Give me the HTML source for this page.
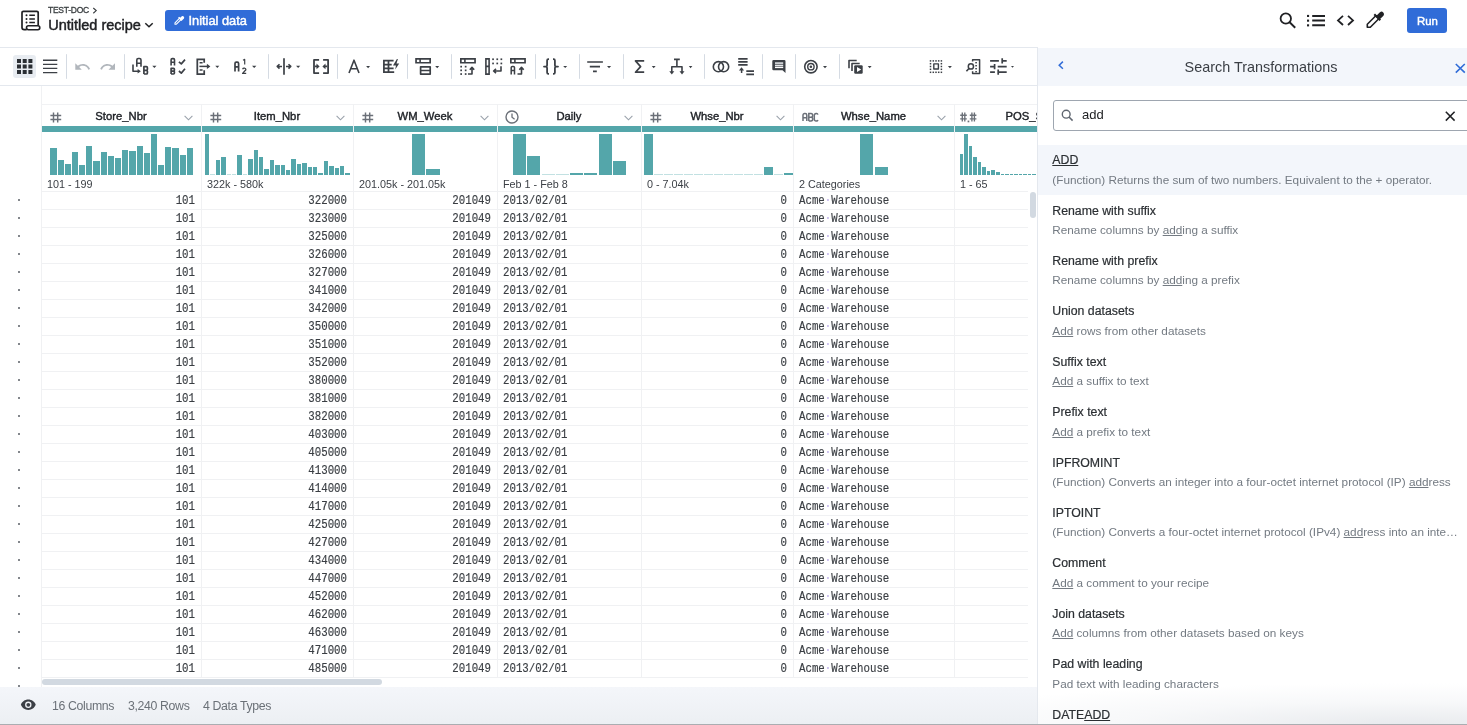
<!DOCTYPE html>
<html><head><meta charset="utf-8">
<style>
*{box-sizing:border-box}
html,body{margin:0;padding:0;width:1467px;height:725px;overflow:hidden;background:#fff;font-family:"Liberation Sans",sans-serif}
body{filter:grayscale(0.01)}
.abs{position:absolute}
#hdrline{position:absolute;left:0;top:47px;width:1467px;height:1px;background:#e4e8ee}
#tbline{position:absolute;left:0;top:85px;width:1037px;height:1px;background:#e4e8ee}
#crumb{position:absolute;left:48px;top:4.8px;font-size:8.5px;color:#3c4043;letter-spacing:-0.25px;-webkit-text-stroke:0.3px #3c4043}
#title{position:absolute;left:48.2px;top:17.3px;font-size:14.5px;color:#202124;white-space:nowrap;-webkit-text-stroke:0.45px #202124}
#initbtn{position:absolute;left:165px;top:10px;width:91px;height:21px;background:#2f6cd9;border-radius:3px}
#initbtn span{position:absolute;left:23.5px;top:3px;font-size:12.8px;color:#fff;white-space:nowrap;-webkit-text-stroke:0.45px #fff}
#runbtn{position:absolute;left:1407px;top:8px;width:40px;height:25px;background:#2f6cd9;border-radius:3px}
#runbtn span{position:absolute;left:10px;top:6.5px;font-size:11.4px;color:#fff;-webkit-text-stroke:0.45px #fff}
/* panel */
#panel{position:absolute;left:1037px;top:47px;width:430px;height:678px;background:#fff;border-left:1px solid #e4e8ee;overflow:hidden}
#phead{position:absolute;left:0;top:1px;width:430px;height:38px;background:#f3f6fb}
#ptitle{position:absolute;left:0;top:11px;width:446px;text-align:center;font-size:14.4px;color:#3a3e44}
#sbox{position:absolute;left:15px;top:53px;width:440px;height:31px;border:1px solid #9ea6b0;border-radius:3px;background:#fff}
#sbox span{position:absolute;left:28px;top:6px;font-size:13px;color:#202124}
.item{position:absolute;left:0;width:430px;height:50.4px}
.item.sel{background:#f3f6fb;height:50px}
.it{position:absolute;left:14.3px;top:8.2px;font-size:12.3px;color:#2b2f33;white-space:nowrap;-webkit-text-stroke:0.2px #2b2f33}
.id{position:absolute;left:14.3px;top:27.5px;font-size:11.75px;color:#737a82;white-space:nowrap}
.it u,.id u{text-decoration:underline;text-underline-offset:1px;text-decoration-thickness:1px}
#pfade{position:absolute;left:0;top:598px;width:430px;height:80px;background:radial-gradient(ellipse 520px 42px at 85% 100%,rgba(226,229,233,0.8),rgba(238,240,243,0.45) 55%,rgba(255,255,255,0) 100%)}
/* table */
#table{position:absolute;left:0;top:86px;width:1037px;height:601px;overflow:hidden}
.vb{position:absolute;top:104px;width:1px;height:573px;background:#f0f1f3}
#lb{position:absolute;left:41px;top:0;width:1px;height:601px;background:#f0f1f3}
#htop{position:absolute;left:41px;top:18px;width:1000px;height:1px;background:#f1f2f4}
.hicon{position:absolute;top:112px;height:12px;line-height:0}
.hlabel{position:absolute;top:109.5px;text-align:center;font-size:11.25px;color:#202328;white-space:nowrap;-webkit-text-stroke:0.4px #202328}
.chev{position:absolute;top:114.5px}
.tbar{position:absolute;top:126px;height:6px;background:#53a6aa}
.hb{position:absolute;background:#53a6aa}
.rng{position:absolute;top:178.3px;font-size:10.8px;color:#3c4046;white-space:nowrap}
.hr{position:absolute;left:42px;width:986px;height:1px;background:#f0f1f3}
.dot{position:absolute;left:18px;width:2px;height:2px;background:#83878c}
.c{position:absolute;height:18px;line-height:18px;font-family:"Liberation Mono",monospace;font-size:10.75px;color:#3a3e43;white-space:nowrap;padding-top:1.2px;transform:scaleY(1.155);transform-origin:0 13.3px;-webkit-text-stroke:0.15px #3a3e43}
.c.r{text-align:right}
.md{color:#b7a6e6;-webkit-text-stroke:0}
#htrack{position:absolute;left:42px;top:592px;width:995px;height:9px;background:#fff}
#vscroll{position:absolute;left:1030px;top:106px;width:6px;height:26px;border-radius:3px;background:#d2d9e1}
#hscroll{position:absolute;left:42px;top:593px;width:340px;height:6px;border-radius:3px;background:#d2d9e1}
#status{position:absolute;left:0;top:687px;width:1037px;height:37px;background:linear-gradient(to bottom,#f4f6fa,#eceff3)}
#status span{position:absolute;top:11.5px;font-size:12.3px;letter-spacing:-0.35px;color:#6b7178;white-space:nowrap}
#bline{position:absolute;left:0;top:724px;width:1467px;height:1px;background:#aaadb1}
</style></head><body>
<!-- header -->
<svg class="abs" style="left:0;top:0" width="60" height="40" viewBox="0 0 60 40">
 <path d="M38.2 25.6V12.7a1.4 1.4 0 0 0-1.4-1.4H23.4a1.4 1.4 0 0 0-1.4 1.4V27.4a2.2 2.2 0 0 0 2.2 2.2h2.5" fill="none" stroke="#202124" stroke-width="1.7"/>
 <rect x="26.5" y="25.8" width="13.3" height="3.9" rx="1.9" fill="none" stroke="#202124" stroke-width="1.6"/>
 <circle cx="26.5" cy="15.3" r="1" fill="#202124"/><circle cx="26.5" cy="18.9" r="1" fill="#202124"/><circle cx="26.5" cy="22.4" r="1" fill="#202124"/>
 <path d="M29.3 15.3H34.9M29.3 18.9H34.9M29.3 22.4H34.9" stroke="#202124" stroke-width="1.5"/>
</svg>
<div id="crumb">TEST-DOC <svg width="6" height="7" viewBox="0 0 6 7" style="vertical-align:-0.8px;margin-left:1.2px"><path d="M1.3 1L4.2 3.6L1.3 6.2" stroke="#3c4043" stroke-width="1.15" fill="none"/></svg></div>
<div id="title">Untitled recipe</div>
<svg class="abs" style="left:144px;top:20.6px" width="10" height="8" viewBox="0 0 10 8"><path d="M1.3 2.2L5 5.8L8.7 2.2" stroke="#202124" stroke-width="1.5" fill="none"/></svg>
<div id="initbtn"><svg class="abs" style="left:0;top:0" width="30" height="21" viewBox="165 10 30 21"><path d="M175 24.2V22.8L179.6 18.2L181 19.6L176.4 24.2Z" fill="none" stroke="#fff" stroke-width="1.1" stroke-linejoin="round"/><path d="M178.6 17.2L182 20.6M180.2 18.8L182.2 16.8A0.9 0.9 0 0 1 183.4 18L181.4 20" stroke="#fff" stroke-width="1.4" fill="#fff"/></svg><span>Initial data</span></div>
<svg class="abs" style="left:1270px;top:5px" width="130" height="30" viewBox="1270 5 130 30">
 <circle cx="1285.8" cy="18.5" r="5.2" fill="none" stroke="#202124" stroke-width="1.8"/>
 <path d="M1289.6 22.3L1295.2 27.7" stroke="#202124" stroke-width="1.9"/>
 <rect x="1307" y="14.9" width="2.1" height="2.1" fill="#202124"/><rect x="1307" y="19.6" width="2.1" height="2.1" fill="#202124"/><rect x="1307" y="24.3" width="2.1" height="2.1" fill="#202124"/>
 <path d="M1312.2 15.9H1325M1312.2 20.6H1325M1312.2 25.3H1325" stroke="#202124" stroke-width="2"/>
 <path d="M1343 15.8L1338 20.4L1343 25M1348 15.8L1353 20.4L1348 25" stroke="#202124" stroke-width="1.8" fill="none"/>
 <path d="M1367.3 27.3V24.3L1375.8 15.8L1378.8 18.8L1370.3 27.3Z" fill="none" stroke="#202124" stroke-width="1.6" stroke-linejoin="round"/>
 <path d="M1374.3 14.3L1380.3 20.3M1376.8 16.8L1380.6 13A1.5 1.5 0 0 1 1382.7 15.1L1378.9 18.9" stroke="#202124" stroke-width="2" fill="#202124"/>
</svg>
<div id="runbtn"><span>Run</span></div>
<div id="hdrline"></div>
<!-- toolbar -->
<svg class="abs" style="left:0;top:48px" width="1037" height="37" viewBox="0 48 1037 37">
 <g fill="none" stroke="#d5dbe3" stroke-width="1">
  <path d="M66.5 54.2V78.8M124.5 54.2V78.8M268.5 54.2V78.8M337.5 54.2V78.8M407.5 54.2V78.8M451.5 54.2V78.8M535.5 54.2V78.8M579.5 54.2V78.8M623.5 54.2V78.8M704.5 54.2V78.8M762.5 54.2V78.8M795.5 54.2V78.8M839.5 54.2V78.8"/>
 </g>
 <rect x="13" y="55" width="23" height="23" rx="3" fill="#e8ecf1"/>
 <g fill="#2a2e33">
  <rect x="17" y="59" width="4" height="4"/><rect x="22.7" y="59" width="4" height="4"/><rect x="28.4" y="59" width="4" height="4"/>
  <rect x="17" y="64.5" width="4" height="4"/><rect x="22.7" y="64.5" width="4" height="4"/><rect x="28.4" y="64.5" width="4" height="4"/>
  <rect x="17" y="70" width="4" height="4"/><rect x="22.7" y="70" width="4" height="4"/><rect x="28.4" y="70" width="4" height="4"/>
 </g>
 <path d="M43 60.2H57.3M43 64.4H57.3M43 68.4H57.3M43 72.6H57.3" stroke="#3c4046" stroke-width="1.4"/>
 <path transform="translate(73.86 58.16) scale(0.72)" d="M12.5 8c-2.65 0-5.05.99-6.9 2.6L2 7v9h9l-3.62-3.62c1.39-1.160 3.16-1.88 5.12-1.88 3.54 0 6.55 2.31 7.6 5.5l2.37-.78C21.08 11.03 17.15 8 12.5 8z" fill="#b1b6bc"/>
 <path transform="translate(99.16 58.16) scale(0.72)" d="M18.4 10.6C16.55 8.99 14.15 8 11.5 8c-4.65 0-8.58 3.03-9.96 7.22L3.9 16c1.05-3.19 4.05-5.5 7.6-5.5 1.95 0 3.73.72 5.12 1.88L13 16h9V7l-3.6 3.6z" fill="#b1b6bc"/>
 <g fill="none" stroke="#3c4046" stroke-width="1.6" stroke-linejoin="round">
  <!-- A->B -->
  <path d="M136.8 66.8V60a1.5 1.5 0 0 1 1.5-1.5h1.2a1.5 1.5 0 0 1 1.5 1.5V66.8M136.8 63.2H140.2"/>
  <path d="M133 64.6V71.2H138.5"/>
  <path d="M143.9 74V66.7H146.4a1 1 0 0 1 1 1V69.3a1 1 0 0 1-1 1H143.9M146.4 70.3a1 1 0 0 1 1 1V73a1 1 0 0 1-1 1H143.9" stroke-width="1.7"/>
  <!-- AB checks -->
  <path d="M171.1 65.5V59.8a1.2 1.2 0 0 1 1.2-1.2h1a1.2 1.2 0 0 1 1.2 1.2V65.5M171.1 62.2H174.3"/>
  <path d="M171.1 74V68.4H173.5a0.9 0.9 0 0 1 0.9 0.9V70.3a0.9 0.9 0 0 1-0.9 0.9H171.1M173.5 71.2a0.9 0.9 0 0 1 0.9 0.9V73.1a0.9 0.9 0 0 1-0.9 0.9H171.1" stroke-width="1.7"/>
  <path d="M178.9 61.8L181.3 63.9L185 59.6M178.9 71L181.3 73.1L185 68.8" stroke-width="1.7"/>
  <!-- col extract -->
  <path d="M204.2 62.8V59.3H197.3V74H204.2V70.2" stroke-width="1.75" stroke-linejoin="miter"/>
  <path d="M199.6 62.8H202.6M199.6 70.1H202.6" stroke-width="1.5"/>
  <path d="M199.4 66.4H207.6" stroke-width="1.5"/>
  <!-- A12 -->
  <path d="M235 71.4V63.4a1.3 1.3 0 0 1 1.3-1.3h1a1.3 1.3 0 0 1 1.3 1.3V71.4M235 66.8H238.6" stroke-width="1.7"/>
  <path d="M243 60.2L244.7 59.4V64.5" stroke-width="1.2"/>
  <path d="M242.6 69.2a1.7 1.6 0 0 1 3.3 0.5L242.6 73.4H246.2" stroke-width="1.3"/>
  <!-- split -->
  <path d="M284 58.3V74.8" stroke-width="1.7"/>
  <path d="M277.4 66.4H282M279.5 64.2L277.2 66.4L279.5 68.6M286 66.4H290.6M288.5 64.2L290.8 66.4L288.5 68.6" stroke-width="1.5"/>
  <!-- merge -->
  <path d="M319.1 59.9H314V73.1H319.1M323.1 59.9H328.1V73.1H323.1" stroke-width="1.8"/>
  <path d="M315 66.4H317.5M327.2 66.4H324.5" stroke-width="1.6"/>
  <!-- A -->
  <path d="M349 73L354 60.2L359 73M350.6 68.8H357.4" stroke-width="1.6"/>
  <!-- E flash -->
  <path d="M393.6 60.6H383.9V72.2H394.2M388.5 60.6V72.2M383.9 64.5H391.7M383.9 68.4H393.6" stroke-width="1.75" stroke-linejoin="miter"/>
  <!-- rows -->
  <rect x="420.6" y="66.8" width="9.6" height="7.3" stroke-width="1.7"/>
  <path d="M420.6 70.5H430.2" stroke-width="1.5"/>
  <!-- icon1 -->
  
  <path d="M468 74H472V67.6M469.8 69.8L472 67.4L474.2 69.8" stroke-width="1.6"/>
  <!-- icon2 -->
  <path d="M485.9 58.9H489.1V74.1H485.9ZM485.9 66.4H489.1" stroke-width="1.6" stroke-linejoin="miter"/>
  <path d="M501 66.2V71H493.8M496 68.8L493.6 71L496 73.2" stroke-width="1.6"/>
  <!-- icon3 -->
  
  <path d="M511.2 74.4V67.6a1.2 1.2 0 0 1 1.2-1.2h.9a1.2 1.2 0 0 1 1.2 1.2V74.4M511.2 70.6H514.5" stroke-width="1.5"/>
  <path d="M517.5 74H521.5V67.6M519.3 69.8L521.5 67.4L523.7 69.8" stroke-width="1.6"/>
  <!-- braces -->
  <path d="M549 59.2H548.4a1.3 1.3 0 0 0-1.3 1.3V65.3a1.3 1.3 0 0 1-1.3 1.3H544H545.8a1.3 1.3 0 0 1 1.3 1.3V72.6a1.3 1.3 0 0 0 1.3 1.3H549M553 59.2H553.6a1.3 1.3 0 0 1 1.3 1.3V65.3a1.3 1.3 0 0 0 1.3 1.3H558H556.2a1.3 1.3 0 0 0-1.3 1.3V72.6a1.3 1.3 0 0 1-1.3 1.3H553" stroke-width="1.8"/>
  <!-- filter -->
  <path d="M587.2 62H602.9M589.8 66.7H600M593 71.4H596.8" stroke-width="1.7"/>
  <!-- sigma -->
  <path d="M644.2 60.9H635.5L640.6 66.6L635.5 72.2H644.2" stroke-width="1.7"/>
  <!-- pivot -->
  <path d="M674 59.4H679.8M676.9 59.4V66.7M671.8 73V66.7H682V73" stroke-width="1.6"/>
  <!-- circles -->
  <circle cx="718.4" cy="66.7" r="5.1" stroke-width="1.6"/>
  <circle cx="723.6" cy="66.7" r="5.1" stroke-width="1.6"/>
  <!-- stack -->
  <path d="M738.2 58.9H747.6M738.2 61.9H747.6M738.2 64.9H747.6M746.3 71.2H754M746.3 74.3H754" stroke-width="1.8"/>
  <path d="M741.6 73V68.8" stroke-width="1.5"/>
  <!-- target -->
  <circle cx="810.9" cy="66.7" r="6.2" stroke-width="1.6"/>
  <circle cx="810.9" cy="66.7" r="3.2" stroke-width="1.4"/>
  <!-- play stack -->
  <path d="M856.7 60.5H849V68.2M859.7 63.5H852V71" stroke-width="1.6"/>
  <!-- select -->
  <rect x="933.8" y="63.9" width="4.6" height="5.1" stroke-width="1.4"/>
  </g><g fill="#3c4046"><rect x="929.75" y="60.15" width="1.5" height="1.5"/><rect x="932.55" y="60.15" width="1.5" height="1.5"/><rect x="935.25" y="60.15" width="1.5" height="1.5"/><rect x="937.95" y="60.15" width="1.5" height="1.5"/><rect x="940.65" y="60.15" width="1.5" height="1.5"/><rect x="929.75" y="62.95" width="1.5" height="1.5"/><rect x="940.65" y="62.95" width="1.5" height="1.5"/><rect x="929.75" y="65.75" width="1.5" height="1.5"/><rect x="940.65" y="65.75" width="1.5" height="1.5"/><rect x="929.75" y="68.55" width="1.5" height="1.5"/><rect x="940.65" y="68.55" width="1.5" height="1.5"/><rect x="929.75" y="71.55" width="1.5" height="1.5"/><rect x="932.55" y="71.55" width="1.5" height="1.5"/><rect x="935.25" y="71.55" width="1.5" height="1.5"/><rect x="937.95" y="71.55" width="1.5" height="1.5"/><rect x="940.65" y="71.55" width="1.5" height="1.5"/></g><g fill="none" stroke="#3c4046" stroke-width="1.6" stroke-linejoin="round">
  <!-- search doc -->
  <path d="M972.6 61.6V59.8H979.6V73.6H972.6V71.3" stroke-width="1.5"/>
  <circle cx="970.9" cy="66.4" r="2.6" stroke-width="1.5"/>
  <path d="M969 68.5L966.4 71.3" stroke-width="1.6"/>
  <!-- sliders -->
  <path d="M990.1 60.9H998.9M1002.2 60.9H1006.7M1002.2 58.3V63.6M990.1 66.6H994.6M997.7 66.6H1006.7M994.6 64.1V69.2M990.1 72.2H994.9M998.2 72.2H1006.7M998.2 69.6V74.7" stroke-width="1.7"/>
 </g>
 <g fill="#3c4046">
  <!-- carets -->
  <path d="M152.3 65.8H156.5L154.4 68Z"/><path d="M1011 65.9H1014L1012.5 67.7Z"/><path d="M215.3 65.8H219.3L217.3 68Z"/><path d="M252 65.8H256.4L254.2 68Z"/>
  <path d="M296.1 65.8H300.2L298.15 68Z"/><path d="M366.1 66H370.1L368.1 68.2Z"/><path d="M435.2 66H439.2L437.2 68.2Z"/>
  <path d="M563.2 66H567.2L565.2 68Z"/><path d="M607 66H611.1L609.05 68.2Z"/><path d="M651.8 66H655.6L653.7 68.2Z"/>
  <path d="M688.8 66H692.4L690.6 68.2Z"/><path d="M823 66H827L825 68.2Z"/><path d="M867.8 66H871.6L869.7 68.2Z"/>
  <path d="M947.9 66H951.9L949.9 68.2Z"/>
  <path d="M316.5 63.6L319.6 66.4L316.5 69.2Z"/><path d="M325.5 63.6L322.4 66.4L325.5 69.2Z"/>
  <path d="M206.9 63.8L210.4 66.4L206.9 69Z"/><path d="M137.6 68.9L140.9 71.2L137.6 73.5Z"/>
  <!-- lightning -->
  <path d="M396.9 58.9L393 65.4H396L395.2 69.6L399.2 63.6H396.5L397.9 58.9Z"/>
  <!-- dots icon1 -->
  <rect x="460.3" y="65.8" width="1.7" height="1.7"/><rect x="464.8" y="65.8" width="1.7" height="1.7"/>
  <rect x="460.3" y="69.5" width="1.7" height="1.7"/><rect x="464.8" y="69.5" width="1.7" height="1.7"/>
  <rect x="460.3" y="73.2" width="1.7" height="1.7"/><rect x="464.8" y="73.2" width="1.7" height="1.7"/>
  <!-- dots icon2 -->
  <rect x="492.2" y="58.4" width="1.7" height="1.7"/><rect x="496.4" y="58.4" width="1.7" height="1.7"/><rect x="500.5" y="58.4" width="1.7" height="1.7"/>
  <rect x="492.2" y="62.6" width="1.7" height="1.7"/><rect x="496.4" y="62.6" width="1.7" height="1.7"/><rect x="500.5" y="62.6" width="1.7" height="1.7"/>
  <!-- pivot arrow heads -->
  <path d="M669.3 71.3H674.3L671.8 74.5Z"/><path d="M679.5 71.3H684.5L682 74.5Z"/>
  <!-- stack arrow -->
  <path d="M738.9 70.5L741.5 67.2L744.1 70.5Z"/>
  <!-- comment -->
  <path d="M773.5 60.1H784.3a1.2 1.2 0 0 1 1.2 1.2V73L782.5 70.3H773.5a1.2 1.2 0 0 1-1.2-1.2V61.3a1.2 1.2 0 0 1 1.2-1.2Z"/>
  <circle cx="810.9" cy="66.7" r="1.3"/>
  <!-- play square -->
  <rect x="854.2" y="65.2" width="8.5" height="8.5" rx="1.2"/>
 </g>
 <rect x="775" y="62.2" width="8.2" height="1.9" fill="#cdd0d4"/><rect x="775" y="64.7" width="8.2" height="1.6" fill="#e6e8eb"/><rect x="775" y="66.8" width="8.2" height="1.3" fill="#fff"/>
 <path d="M857 66.9L861.2 69.5L857 72.1Z" fill="#fff"/>
 <g fill="#3c4046"><rect x="975.3" y="62" width="1.6" height="1.4"/><rect x="975.3" y="65" width="1.6" height="1.4"/><rect x="975.3" y="68" width="1.6" height="1.4"/><rect x="975.3" y="71" width="1.6" height="1.4"/></g>

 <g fill="#3c4046">
  <path fill-rule="evenodd" d="M415.2 58.1H431V63.6H415.2ZM416.9 59.8H419.3V61.9H416.9ZM420.9 59.8H429.3V61.9H420.9Z"/>
  <path fill-rule="evenodd" d="M460 58.1H475.9V63.6H460ZM461.7 59.8H464.1V61.9H461.7ZM465.7 59.8H474.2V61.9H465.7Z"/>
  <path fill-rule="evenodd" d="M510 58.1H525.9V63.6H510ZM511.7 59.8H514.1V61.9H511.7ZM515.7 59.8H524.2V61.9H515.7Z"/>
 </g>
</svg>
<div id="tbline"></div>
<!-- table -->
<div id="table">
 <div id="lb"></div>
 <div id="htop"></div>
 <div style="position:absolute;left:0;top:-86px;width:1037px;height:686px">
<div class="vb" style="left:201px"></div>
<div class="hicon" style="left:50px;top:111.7px"><svg width="12" height="11" viewBox="0 0 12 11"><path d="M3.5 0.6V10.4M7.7 0.6V10.4M0.4 3.4H11.2M0.4 7.5H11.2" stroke="#6b7078" stroke-width="1.45" fill="none"/></svg></div>
<div class="hlabel" style="left:41px;width:160px">Store_Nbr</div>
<svg class="chev" style="left:184px" width="9" height="6" viewBox="0 0 9 6"><path d="M0.6 0.8L4.5 4.8L8.4 0.8" stroke="#9aa2ab" stroke-width="1.1" fill="none"/></svg>
<div class="tbar" style="left:42px;width:159px"></div>
<div class="rng" style="left:47px">101 - 199</div>
<div class="vb" style="left:353px"></div>
<div class="hicon" style="left:210px;top:111.7px"><svg width="12" height="11" viewBox="0 0 12 11"><path d="M3.5 0.6V10.4M7.7 0.6V10.4M0.4 3.4H11.2M0.4 7.5H11.2" stroke="#6b7078" stroke-width="1.45" fill="none"/></svg></div>
<div class="hlabel" style="left:201px;width:152px">Item_Nbr</div>
<svg class="chev" style="left:336px" width="9" height="6" viewBox="0 0 9 6"><path d="M0.6 0.8L4.5 4.8L8.4 0.8" stroke="#9aa2ab" stroke-width="1.1" fill="none"/></svg>
<div class="tbar" style="left:202px;width:151px"></div>
<div class="rng" style="left:207px">322k - 580k</div>
<div class="vb" style="left:497px"></div>
<div class="hicon" style="left:362px;top:111.7px"><svg width="12" height="11" viewBox="0 0 12 11"><path d="M3.5 0.6V10.4M7.7 0.6V10.4M0.4 3.4H11.2M0.4 7.5H11.2" stroke="#6b7078" stroke-width="1.45" fill="none"/></svg></div>
<div class="hlabel" style="left:353px;width:144px">WM_Week</div>
<svg class="chev" style="left:480px" width="9" height="6" viewBox="0 0 9 6"><path d="M0.6 0.8L4.5 4.8L8.4 0.8" stroke="#9aa2ab" stroke-width="1.1" fill="none"/></svg>
<div class="tbar" style="left:354px;width:143px"></div>
<div class="rng" style="left:359px">201.05k - 201.05k</div>
<div class="vb" style="left:641px"></div>
<div class="hicon" style="left:505px;top:110px"><svg width="14" height="14" viewBox="0 0 14 14"><circle cx="7" cy="7" r="6" stroke="#6b7078" stroke-width="1.4" fill="none"/><path d="M7 3.5V7.2L9.6 9.2" stroke="#6b7078" stroke-width="1.3" fill="none"/></svg></div>
<div class="hlabel" style="left:497px;width:144px">Daily</div>
<svg class="chev" style="left:624px" width="9" height="6" viewBox="0 0 9 6"><path d="M0.6 0.8L4.5 4.8L8.4 0.8" stroke="#9aa2ab" stroke-width="1.1" fill="none"/></svg>
<div class="tbar" style="left:498px;width:143px"></div>
<div class="rng" style="left:503px">Feb 1 - Feb 8</div>
<div class="vb" style="left:793px"></div>
<div class="hicon" style="left:650px;top:111.7px"><svg width="12" height="11" viewBox="0 0 12 11"><path d="M3.5 0.6V10.4M7.7 0.6V10.4M0.4 3.4H11.2M0.4 7.5H11.2" stroke="#6b7078" stroke-width="1.45" fill="none"/></svg></div>
<div class="hlabel" style="left:641px;width:152px">Whse_Nbr</div>
<svg class="chev" style="left:776px" width="9" height="6" viewBox="0 0 9 6"><path d="M0.6 0.8L4.5 4.8L8.4 0.8" stroke="#9aa2ab" stroke-width="1.1" fill="none"/></svg>
<div class="tbar" style="left:642px;width:151px"></div>
<div class="rng" style="left:647px">0 - 7.04k</div>
<div class="vb" style="left:954px"></div>
<div class="hicon" style="left:802px;top:111.7px"><svg width="17" height="10" viewBox="0 0 17 10"><g fill="none" stroke="#6b7078" stroke-width="1.5"><path d="M1 9V3.2a1.6 1.6 0 0 1 1.6-1.6h0.6a1.6 1.6 0 0 1 1.6 1.6V9M1 5.8H4.8"/><path d="M6.8 9V1.6H9a1.7 1.8 0 0 1 0 3.6H6.8M9 5.2a1.8 1.9 0 0 1 0 3.8H6.8"/><path d="M15.9 2.6a1.4 1.4 0 0 0-1.3-1H14a1.7 1.7 0 0 0-1.7 1.7V7.3A1.7 1.7 0 0 0 14 9h0.6a1.4 1.4 0 0 0 1.3-1"/></g></svg></div>
<div class="hlabel" style="left:793px;width:161px">Whse_Name</div>
<svg class="chev" style="left:937px" width="9" height="6" viewBox="0 0 9 6"><path d="M0.6 0.8L4.5 4.8L8.4 0.8" stroke="#9aa2ab" stroke-width="1.1" fill="none"/></svg>
<div class="tbar" style="left:794px;width:160px"></div>
<div class="rng" style="left:799px">2 Categories</div>
<div class="vb" style="left:1115px"></div>
<div class="hicon" style="left:960px;top:111.7px"><svg width="17" height="11" viewBox="0 0 17 11"><path d="M2.3 0.6V9.4M4.8 0.6V9.4M0.2 3.2H6.8M0.2 6.8H6.8M11.9 0.6V9.4M14.4 0.6V9.4M9.8 3.2H16.4M9.8 6.8H16.4" stroke="#6b7078" stroke-width="1.35" fill="none"/><rect x="7.6" y="8.6" width="1.7" height="1.7" fill="#6b7078"/></svg></div>
<div class="hlabel" style="left:954px;width:161px">POS_Sales</div>
<svg class="chev" style="left:1098px" width="9" height="6" viewBox="0 0 9 6"><path d="M0.6 0.8L4.5 4.8L8.4 0.8" stroke="#9aa2ab" stroke-width="1.1" fill="none"/></svg>
<div class="tbar" style="left:955px;width:160px"></div>
<div class="rng" style="left:960px">1 - 65</div>
<div class="hb" style="left:50.40px;width:6.20px;top:147.60px;height:27.40px"></div>
<div class="hb" style="left:57.58px;width:6.20px;top:160.00px;height:15.00px"></div>
<div class="hb" style="left:64.76px;width:6.20px;top:164.30px;height:10.70px"></div>
<div class="hb" style="left:71.94px;width:6.20px;top:152.00px;height:23.00px"></div>
<div class="hb" style="left:79.12px;width:6.20px;top:165.40px;height:9.60px"></div>
<div class="hb" style="left:86.30px;width:6.20px;top:145.80px;height:29.20px"></div>
<div class="hb" style="left:93.48px;width:6.20px;top:161.00px;height:14.00px"></div>
<div class="hb" style="left:100.66px;width:6.20px;top:152.00px;height:23.00px"></div>
<div class="hb" style="left:107.84px;width:6.20px;top:155.60px;height:19.40px"></div>
<div class="hb" style="left:115.02px;width:6.20px;top:158.30px;height:16.70px"></div>
<div class="hb" style="left:122.20px;width:6.20px;top:150.10px;height:24.90px"></div>
<div class="hb" style="left:129.38px;width:6.20px;top:151.00px;height:24.00px"></div>
<div class="hb" style="left:136.56px;width:6.20px;top:145.80px;height:29.20px"></div>
<div class="hb" style="left:143.74px;width:6.20px;top:153.10px;height:21.90px"></div>
<div class="hb" style="left:150.92px;width:6.20px;top:134.30px;height:40.70px"></div>
<div class="hb" style="left:158.10px;width:6.20px;top:164.50px;height:10.50px"></div>
<div class="hb" style="left:165.28px;width:6.20px;top:146.90px;height:28.10px"></div>
<div class="hb" style="left:172.46px;width:6.20px;top:147.60px;height:27.40px"></div>
<div class="hb" style="left:179.64px;width:6.20px;top:154.80px;height:20.20px"></div>
<div class="hb" style="left:186.82px;width:6.20px;top:148.30px;height:26.70px"></div>
<div class="hb" style="left:205.00px;width:4.40px;top:134.30px;height:40.70px"></div>
<div class="hb" style="left:210.40px;width:4.40px;top:174px;height:1px;background:#c2e1e2"></div>
<div class="hb" style="left:215.80px;width:4.40px;top:160.00px;height:15.00px"></div>
<div class="hb" style="left:221.20px;width:4.40px;top:156.50px;height:18.50px"></div>
<div class="hb" style="left:226.60px;width:4.40px;top:174px;height:1px;background:#c2e1e2"></div>
<div class="hb" style="left:232.00px;width:4.40px;top:174px;height:1px;background:#c2e1e2"></div>
<div class="hb" style="left:237.40px;width:4.40px;top:155.40px;height:19.60px"></div>
<div class="hb" style="left:242.80px;width:4.40px;top:174px;height:1px;background:#c2e1e2"></div>
<div class="hb" style="left:248.20px;width:4.40px;top:159.20px;height:15.80px"></div>
<div class="hb" style="left:253.60px;width:4.40px;top:150.10px;height:24.90px"></div>
<div class="hb" style="left:259.00px;width:4.40px;top:156.50px;height:18.50px"></div>
<div class="hb" style="left:264.40px;width:4.40px;top:169.00px;height:6.00px"></div>
<div class="hb" style="left:269.80px;width:4.40px;top:160.00px;height:15.00px"></div>
<div class="hb" style="left:275.20px;width:4.40px;top:165.40px;height:9.60px"></div>
<div class="hb" style="left:280.60px;width:4.40px;top:165.40px;height:9.60px"></div>
<div class="hb" style="left:286.00px;width:4.40px;top:170.00px;height:5.00px"></div>
<div class="hb" style="left:291.40px;width:4.40px;top:159.20px;height:15.80px"></div>
<div class="hb" style="left:296.80px;width:4.40px;top:163.80px;height:11.20px"></div>
<div class="hb" style="left:302.20px;width:4.40px;top:162.70px;height:12.30px"></div>
<div class="hb" style="left:307.60px;width:4.40px;top:167.00px;height:8.00px"></div>
<div class="hb" style="left:313.00px;width:4.40px;top:167.00px;height:8.00px"></div>
<div class="hb" style="left:318.40px;width:4.40px;top:172.50px;height:2.50px"></div>
<div class="hb" style="left:323.80px;width:4.40px;top:161.00px;height:14.00px"></div>
<div class="hb" style="left:329.20px;width:4.40px;top:166.30px;height:8.70px"></div>
<div class="hb" style="left:334.60px;width:4.40px;top:168.10px;height:6.90px"></div>
<div class="hb" style="left:340.00px;width:4.40px;top:166.30px;height:8.70px"></div>
<div class="hb" style="left:345.40px;width:4.40px;top:172.50px;height:2.50px"></div>
<div class="hb" style="left:412.00px;width:13.30px;top:134.30px;height:40.70px"></div>
<div class="hb" style="left:426.30px;width:13.30px;top:169.00px;height:6.00px"></div>
<div class="hb" style="left:512.90px;width:13.10px;top:134.30px;height:40.70px"></div>
<div class="hb" style="left:527.20px;width:13.10px;top:156.30px;height:18.70px"></div>
<div class="hb" style="left:541.50px;width:13.10px;top:174px;height:1px;background:#c2e1e2"></div>
<div class="hb" style="left:555.80px;width:13.10px;top:174px;height:1px;background:#c2e1e2"></div>
<div class="hb" style="left:570.10px;width:13.10px;top:173.00px;height:2.00px"></div>
<div class="hb" style="left:584.40px;width:13.10px;top:173.00px;height:2.00px"></div>
<div class="hb" style="left:598.70px;width:13.10px;top:134.30px;height:40.70px"></div>
<div class="hb" style="left:613.00px;width:13.10px;top:160.80px;height:14.20px"></div>
<div class="hb" style="left:644.00px;width:9.00px;top:134.30px;height:40.70px"></div>
<div class="hb" style="left:654.00px;width:9.00px;top:174px;height:1px;background:#c2e1e2"></div>
<div class="hb" style="left:664.00px;width:9.00px;top:174px;height:1px;background:#c2e1e2"></div>
<div class="hb" style="left:674.00px;width:9.00px;top:174px;height:1px;background:#c2e1e2"></div>
<div class="hb" style="left:684.00px;width:9.00px;top:174px;height:1px;background:#c2e1e2"></div>
<div class="hb" style="left:694.00px;width:9.00px;top:174px;height:1px;background:#c2e1e2"></div>
<div class="hb" style="left:704.00px;width:9.00px;top:174px;height:1px;background:#c2e1e2"></div>
<div class="hb" style="left:714.00px;width:9.00px;top:174px;height:1px;background:#c2e1e2"></div>
<div class="hb" style="left:724.00px;width:9.00px;top:174px;height:1px;background:#c2e1e2"></div>
<div class="hb" style="left:734.00px;width:9.00px;top:174px;height:1px;background:#c2e1e2"></div>
<div class="hb" style="left:744.00px;width:9.00px;top:174px;height:1px;background:#c2e1e2"></div>
<div class="hb" style="left:754.00px;width:9.00px;top:174px;height:1px;background:#c2e1e2"></div>
<div class="hb" style="left:764.00px;width:9.00px;top:167.00px;height:8.00px"></div>
<div class="hb" style="left:774.00px;width:9.00px;top:174px;height:1px;background:#c2e1e2"></div>
<div class="hb" style="left:784.00px;width:9.00px;top:173.00px;height:2.00px"></div>
<div class="hb" style="left:860.20px;width:13.30px;top:134.20px;height:40.80px"></div>
<div class="hb" style="left:874.80px;width:13.30px;top:167.00px;height:8.00px"></div>
<div class="hb" style="left:959.60px;width:3.60px;top:154.00px;height:21.00px"></div>
<div class="hb" style="left:964.15px;width:3.60px;top:134.10px;height:40.90px"></div>
<div class="hb" style="left:968.70px;width:3.60px;top:145.90px;height:29.10px"></div>
<div class="hb" style="left:973.25px;width:3.60px;top:157.10px;height:17.90px"></div>
<div class="hb" style="left:977.80px;width:3.60px;top:161.70px;height:13.30px"></div>
<div class="hb" style="left:982.35px;width:3.60px;top:167.20px;height:7.80px"></div>
<div class="hb" style="left:986.90px;width:3.60px;top:170.70px;height:4.30px"></div>
<div class="hb" style="left:991.45px;width:3.60px;top:169.90px;height:5.10px"></div>
<div class="hb" style="left:996.00px;width:3.60px;top:172.40px;height:2.60px"></div>
<div class="hb" style="left:1000.55px;width:3.60px;top:174.00px;height:1.00px"></div>
<div class="hb" style="left:1005.10px;width:3.60px;top:174.00px;height:1.00px"></div>
<div class="hb" style="left:1009.65px;width:3.60px;top:174.00px;height:1.00px"></div>
<div class="hb" style="left:1014.20px;width:3.60px;top:174.00px;height:1.00px"></div>
<div class="hb" style="left:1018.75px;width:3.60px;top:174.00px;height:1.00px"></div>
<div class="hb" style="left:1023.30px;width:3.60px;top:174.00px;height:1.00px"></div>
<div class="hb" style="left:1027.85px;width:3.60px;top:174.00px;height:1.00px"></div>
<div class="hb" style="left:1032.40px;width:3.60px;top:174.00px;height:1.00px"></div>
<div class="hb" style="left:1036.95px;width:3.60px;top:174.00px;height:1.00px"></div>
<div class="hb" style="left:1041.50px;width:3.60px;top:174.00px;height:1.00px"></div>
<div class="hb" style="left:1046.05px;width:3.60px;top:174.00px;height:1.00px"></div>
<div class="hb" style="left:1050.60px;width:3.60px;top:174.00px;height:1.00px"></div>
<div class="hb" style="left:1055.15px;width:3.60px;top:174.00px;height:1.00px"></div>
<div class="hb" style="left:1059.70px;width:3.60px;top:174.00px;height:1.00px"></div>
<div class="hb" style="left:1064.25px;width:3.60px;top:174.00px;height:1.00px"></div>
<div class="hb" style="left:1068.80px;width:3.60px;top:174.00px;height:1.00px"></div>
<div class="hb" style="left:1073.35px;width:3.60px;top:174.00px;height:1.00px"></div>
<div class="hb" style="left:1077.90px;width:3.60px;top:174.00px;height:1.00px"></div>
<div class="hb" style="left:1082.45px;width:3.60px;top:174.00px;height:1.00px"></div>
<div class="hb" style="left:1087.00px;width:3.60px;top:174.00px;height:1.00px"></div>
<div class="hb" style="left:1091.55px;width:3.60px;top:174.00px;height:1.00px"></div>
<div class="hb" style="left:1096.10px;width:3.60px;top:174.00px;height:1.00px"></div>
<div class="hb" style="left:1100.65px;width:3.60px;top:174.00px;height:1.00px"></div>
<div class="hb" style="left:1105.20px;width:3.60px;top:174.00px;height:1.00px"></div>
<div class="hr" style="top:191px"></div>
<div class="dot" style="top:199px"></div>
<div class="c r" style="top:191px;left:41px;width:154px">101</div>
<div class="c r" style="top:191px;left:201px;width:146px">322000</div>
<div class="c r" style="top:191px;left:353px;width:138px">201049</div>
<div class="c" style="top:191px;left:503px">2013/02/01</div>
<div class="c r" style="top:191px;left:641px;width:146px">0</div>
<div class="c" style="top:191px;left:799px">Acme<span class="md">·</span>Warehouse</div>
<div class="hr" style="top:209px"></div>
<div class="dot" style="top:217px"></div>
<div class="c r" style="top:209px;left:41px;width:154px">101</div>
<div class="c r" style="top:209px;left:201px;width:146px">323000</div>
<div class="c r" style="top:209px;left:353px;width:138px">201049</div>
<div class="c" style="top:209px;left:503px">2013/02/01</div>
<div class="c r" style="top:209px;left:641px;width:146px">0</div>
<div class="c" style="top:209px;left:799px">Acme<span class="md">·</span>Warehouse</div>
<div class="hr" style="top:227px"></div>
<div class="dot" style="top:235px"></div>
<div class="c r" style="top:227px;left:41px;width:154px">101</div>
<div class="c r" style="top:227px;left:201px;width:146px">325000</div>
<div class="c r" style="top:227px;left:353px;width:138px">201049</div>
<div class="c" style="top:227px;left:503px">2013/02/01</div>
<div class="c r" style="top:227px;left:641px;width:146px">0</div>
<div class="c" style="top:227px;left:799px">Acme<span class="md">·</span>Warehouse</div>
<div class="hr" style="top:245px"></div>
<div class="dot" style="top:253px"></div>
<div class="c r" style="top:245px;left:41px;width:154px">101</div>
<div class="c r" style="top:245px;left:201px;width:146px">326000</div>
<div class="c r" style="top:245px;left:353px;width:138px">201049</div>
<div class="c" style="top:245px;left:503px">2013/02/01</div>
<div class="c r" style="top:245px;left:641px;width:146px">0</div>
<div class="c" style="top:245px;left:799px">Acme<span class="md">·</span>Warehouse</div>
<div class="hr" style="top:263px"></div>
<div class="dot" style="top:271px"></div>
<div class="c r" style="top:263px;left:41px;width:154px">101</div>
<div class="c r" style="top:263px;left:201px;width:146px">327000</div>
<div class="c r" style="top:263px;left:353px;width:138px">201049</div>
<div class="c" style="top:263px;left:503px">2013/02/01</div>
<div class="c r" style="top:263px;left:641px;width:146px">0</div>
<div class="c" style="top:263px;left:799px">Acme<span class="md">·</span>Warehouse</div>
<div class="hr" style="top:281px"></div>
<div class="dot" style="top:289px"></div>
<div class="c r" style="top:281px;left:41px;width:154px">101</div>
<div class="c r" style="top:281px;left:201px;width:146px">341000</div>
<div class="c r" style="top:281px;left:353px;width:138px">201049</div>
<div class="c" style="top:281px;left:503px">2013/02/01</div>
<div class="c r" style="top:281px;left:641px;width:146px">0</div>
<div class="c" style="top:281px;left:799px">Acme<span class="md">·</span>Warehouse</div>
<div class="hr" style="top:299px"></div>
<div class="dot" style="top:307px"></div>
<div class="c r" style="top:299px;left:41px;width:154px">101</div>
<div class="c r" style="top:299px;left:201px;width:146px">342000</div>
<div class="c r" style="top:299px;left:353px;width:138px">201049</div>
<div class="c" style="top:299px;left:503px">2013/02/01</div>
<div class="c r" style="top:299px;left:641px;width:146px">0</div>
<div class="c" style="top:299px;left:799px">Acme<span class="md">·</span>Warehouse</div>
<div class="hr" style="top:317px"></div>
<div class="dot" style="top:325px"></div>
<div class="c r" style="top:317px;left:41px;width:154px">101</div>
<div class="c r" style="top:317px;left:201px;width:146px">350000</div>
<div class="c r" style="top:317px;left:353px;width:138px">201049</div>
<div class="c" style="top:317px;left:503px">2013/02/01</div>
<div class="c r" style="top:317px;left:641px;width:146px">0</div>
<div class="c" style="top:317px;left:799px">Acme<span class="md">·</span>Warehouse</div>
<div class="hr" style="top:335px"></div>
<div class="dot" style="top:343px"></div>
<div class="c r" style="top:335px;left:41px;width:154px">101</div>
<div class="c r" style="top:335px;left:201px;width:146px">351000</div>
<div class="c r" style="top:335px;left:353px;width:138px">201049</div>
<div class="c" style="top:335px;left:503px">2013/02/01</div>
<div class="c r" style="top:335px;left:641px;width:146px">0</div>
<div class="c" style="top:335px;left:799px">Acme<span class="md">·</span>Warehouse</div>
<div class="hr" style="top:353px"></div>
<div class="dot" style="top:361px"></div>
<div class="c r" style="top:353px;left:41px;width:154px">101</div>
<div class="c r" style="top:353px;left:201px;width:146px">352000</div>
<div class="c r" style="top:353px;left:353px;width:138px">201049</div>
<div class="c" style="top:353px;left:503px">2013/02/01</div>
<div class="c r" style="top:353px;left:641px;width:146px">0</div>
<div class="c" style="top:353px;left:799px">Acme<span class="md">·</span>Warehouse</div>
<div class="hr" style="top:371px"></div>
<div class="dot" style="top:379px"></div>
<div class="c r" style="top:371px;left:41px;width:154px">101</div>
<div class="c r" style="top:371px;left:201px;width:146px">380000</div>
<div class="c r" style="top:371px;left:353px;width:138px">201049</div>
<div class="c" style="top:371px;left:503px">2013/02/01</div>
<div class="c r" style="top:371px;left:641px;width:146px">0</div>
<div class="c" style="top:371px;left:799px">Acme<span class="md">·</span>Warehouse</div>
<div class="hr" style="top:389px"></div>
<div class="dot" style="top:397px"></div>
<div class="c r" style="top:389px;left:41px;width:154px">101</div>
<div class="c r" style="top:389px;left:201px;width:146px">381000</div>
<div class="c r" style="top:389px;left:353px;width:138px">201049</div>
<div class="c" style="top:389px;left:503px">2013/02/01</div>
<div class="c r" style="top:389px;left:641px;width:146px">0</div>
<div class="c" style="top:389px;left:799px">Acme<span class="md">·</span>Warehouse</div>
<div class="hr" style="top:407px"></div>
<div class="dot" style="top:415px"></div>
<div class="c r" style="top:407px;left:41px;width:154px">101</div>
<div class="c r" style="top:407px;left:201px;width:146px">382000</div>
<div class="c r" style="top:407px;left:353px;width:138px">201049</div>
<div class="c" style="top:407px;left:503px">2013/02/01</div>
<div class="c r" style="top:407px;left:641px;width:146px">0</div>
<div class="c" style="top:407px;left:799px">Acme<span class="md">·</span>Warehouse</div>
<div class="hr" style="top:425px"></div>
<div class="dot" style="top:433px"></div>
<div class="c r" style="top:425px;left:41px;width:154px">101</div>
<div class="c r" style="top:425px;left:201px;width:146px">403000</div>
<div class="c r" style="top:425px;left:353px;width:138px">201049</div>
<div class="c" style="top:425px;left:503px">2013/02/01</div>
<div class="c r" style="top:425px;left:641px;width:146px">0</div>
<div class="c" style="top:425px;left:799px">Acme<span class="md">·</span>Warehouse</div>
<div class="hr" style="top:443px"></div>
<div class="dot" style="top:451px"></div>
<div class="c r" style="top:443px;left:41px;width:154px">101</div>
<div class="c r" style="top:443px;left:201px;width:146px">405000</div>
<div class="c r" style="top:443px;left:353px;width:138px">201049</div>
<div class="c" style="top:443px;left:503px">2013/02/01</div>
<div class="c r" style="top:443px;left:641px;width:146px">0</div>
<div class="c" style="top:443px;left:799px">Acme<span class="md">·</span>Warehouse</div>
<div class="hr" style="top:461px"></div>
<div class="dot" style="top:469px"></div>
<div class="c r" style="top:461px;left:41px;width:154px">101</div>
<div class="c r" style="top:461px;left:201px;width:146px">413000</div>
<div class="c r" style="top:461px;left:353px;width:138px">201049</div>
<div class="c" style="top:461px;left:503px">2013/02/01</div>
<div class="c r" style="top:461px;left:641px;width:146px">0</div>
<div class="c" style="top:461px;left:799px">Acme<span class="md">·</span>Warehouse</div>
<div class="hr" style="top:479px"></div>
<div class="dot" style="top:487px"></div>
<div class="c r" style="top:479px;left:41px;width:154px">101</div>
<div class="c r" style="top:479px;left:201px;width:146px">414000</div>
<div class="c r" style="top:479px;left:353px;width:138px">201049</div>
<div class="c" style="top:479px;left:503px">2013/02/01</div>
<div class="c r" style="top:479px;left:641px;width:146px">0</div>
<div class="c" style="top:479px;left:799px">Acme<span class="md">·</span>Warehouse</div>
<div class="hr" style="top:497px"></div>
<div class="dot" style="top:505px"></div>
<div class="c r" style="top:497px;left:41px;width:154px">101</div>
<div class="c r" style="top:497px;left:201px;width:146px">417000</div>
<div class="c r" style="top:497px;left:353px;width:138px">201049</div>
<div class="c" style="top:497px;left:503px">2013/02/01</div>
<div class="c r" style="top:497px;left:641px;width:146px">0</div>
<div class="c" style="top:497px;left:799px">Acme<span class="md">·</span>Warehouse</div>
<div class="hr" style="top:515px"></div>
<div class="dot" style="top:523px"></div>
<div class="c r" style="top:515px;left:41px;width:154px">101</div>
<div class="c r" style="top:515px;left:201px;width:146px">425000</div>
<div class="c r" style="top:515px;left:353px;width:138px">201049</div>
<div class="c" style="top:515px;left:503px">2013/02/01</div>
<div class="c r" style="top:515px;left:641px;width:146px">0</div>
<div class="c" style="top:515px;left:799px">Acme<span class="md">·</span>Warehouse</div>
<div class="hr" style="top:533px"></div>
<div class="dot" style="top:541px"></div>
<div class="c r" style="top:533px;left:41px;width:154px">101</div>
<div class="c r" style="top:533px;left:201px;width:146px">427000</div>
<div class="c r" style="top:533px;left:353px;width:138px">201049</div>
<div class="c" style="top:533px;left:503px">2013/02/01</div>
<div class="c r" style="top:533px;left:641px;width:146px">0</div>
<div class="c" style="top:533px;left:799px">Acme<span class="md">·</span>Warehouse</div>
<div class="hr" style="top:551px"></div>
<div class="dot" style="top:559px"></div>
<div class="c r" style="top:551px;left:41px;width:154px">101</div>
<div class="c r" style="top:551px;left:201px;width:146px">434000</div>
<div class="c r" style="top:551px;left:353px;width:138px">201049</div>
<div class="c" style="top:551px;left:503px">2013/02/01</div>
<div class="c r" style="top:551px;left:641px;width:146px">0</div>
<div class="c" style="top:551px;left:799px">Acme<span class="md">·</span>Warehouse</div>
<div class="hr" style="top:569px"></div>
<div class="dot" style="top:577px"></div>
<div class="c r" style="top:569px;left:41px;width:154px">101</div>
<div class="c r" style="top:569px;left:201px;width:146px">447000</div>
<div class="c r" style="top:569px;left:353px;width:138px">201049</div>
<div class="c" style="top:569px;left:503px">2013/02/01</div>
<div class="c r" style="top:569px;left:641px;width:146px">0</div>
<div class="c" style="top:569px;left:799px">Acme<span class="md">·</span>Warehouse</div>
<div class="hr" style="top:587px"></div>
<div class="dot" style="top:595px"></div>
<div class="c r" style="top:587px;left:41px;width:154px">101</div>
<div class="c r" style="top:587px;left:201px;width:146px">452000</div>
<div class="c r" style="top:587px;left:353px;width:138px">201049</div>
<div class="c" style="top:587px;left:503px">2013/02/01</div>
<div class="c r" style="top:587px;left:641px;width:146px">0</div>
<div class="c" style="top:587px;left:799px">Acme<span class="md">·</span>Warehouse</div>
<div class="hr" style="top:605px"></div>
<div class="dot" style="top:613px"></div>
<div class="c r" style="top:605px;left:41px;width:154px">101</div>
<div class="c r" style="top:605px;left:201px;width:146px">462000</div>
<div class="c r" style="top:605px;left:353px;width:138px">201049</div>
<div class="c" style="top:605px;left:503px">2013/02/01</div>
<div class="c r" style="top:605px;left:641px;width:146px">0</div>
<div class="c" style="top:605px;left:799px">Acme<span class="md">·</span>Warehouse</div>
<div class="hr" style="top:623px"></div>
<div class="dot" style="top:631px"></div>
<div class="c r" style="top:623px;left:41px;width:154px">101</div>
<div class="c r" style="top:623px;left:201px;width:146px">463000</div>
<div class="c r" style="top:623px;left:353px;width:138px">201049</div>
<div class="c" style="top:623px;left:503px">2013/02/01</div>
<div class="c r" style="top:623px;left:641px;width:146px">0</div>
<div class="c" style="top:623px;left:799px">Acme<span class="md">·</span>Warehouse</div>
<div class="hr" style="top:641px"></div>
<div class="dot" style="top:649px"></div>
<div class="c r" style="top:641px;left:41px;width:154px">101</div>
<div class="c r" style="top:641px;left:201px;width:146px">471000</div>
<div class="c r" style="top:641px;left:353px;width:138px">201049</div>
<div class="c" style="top:641px;left:503px">2013/02/01</div>
<div class="c r" style="top:641px;left:641px;width:146px">0</div>
<div class="c" style="top:641px;left:799px">Acme<span class="md">·</span>Warehouse</div>
<div class="hr" style="top:659px"></div>
<div class="dot" style="top:667px"></div>
<div class="c r" style="top:659px;left:41px;width:154px">101</div>
<div class="c r" style="top:659px;left:201px;width:146px">485000</div>
<div class="c r" style="top:659px;left:353px;width:138px">201049</div>
<div class="c" style="top:659px;left:503px">2013/02/01</div>
<div class="c r" style="top:659px;left:641px;width:146px">0</div>
<div class="c" style="top:659px;left:799px">Acme<span class="md">·</span>Warehouse</div>
<div class="hr" style="top:677px"></div>
<div class="dot" style="top:685px"></div>
<div class="c r" style="top:677px;left:41px;width:154px">101</div>
<div class="c r" style="top:677px;left:201px;width:146px">491000</div>
<div class="c r" style="top:677px;left:353px;width:138px">201049</div>
<div class="c" style="top:677px;left:503px">2013/02/01</div>
<div class="c r" style="top:677px;left:641px;width:146px">0</div>
<div class="c" style="top:677px;left:799px">Acme<span class="md">·</span>Warehouse</div>
 </div>
 <div id="htrack"></div>
 <div id="vscroll"></div>
 <div id="hscroll"></div>
</div>
<div id="status">
 <svg class="abs" style="left:20px;top:11px" width="17" height="13" viewBox="0 0 17 13"><path d="M8.3 1.5C4.8 1.5 2 3.7 0.9 6.7C2 9.7 4.8 11.9 8.3 11.9S14.6 9.7 15.7 6.7C14.6 3.7 11.8 1.5 8.3 1.5Z" fill="#3c4046"/><circle cx="8.3" cy="6.8" r="3.2" fill="#f1f3f7"/><circle cx="8.3" cy="6.8" r="1.9" fill="#3c4046"/></svg>
 <span style="left:52px">16 Columns</span>
 <span style="left:128px">3,240 Rows</span>
 <span style="left:203px">4 Data Types</span>
</div>
<!-- panel -->
<div id="panel">
 <div id="phead">
  <svg class="abs" style="left:19px;top:12px" width="10" height="11" viewBox="0 0 10 11"><path d="M5.9 1.6L2.2 5.2L5.9 8.8" stroke="#2f6cd9" stroke-width="1.5" fill="none"/></svg>
  <div id="ptitle">Search Transformations</div>
  <svg class="abs" style="left:416px;top:14px" width="14" height="12" viewBox="0 0 14 12"><path d="M1.8 2L10.8 10.6M10.8 2L1.8 10.6" stroke="#2f6cd9" stroke-width="1.6" fill="none"/></svg>
 </div>
 <div id="sbox">
  <svg class="abs" style="left:6.5px;top:8px" width="14" height="14" viewBox="0 0 14 14"><circle cx="5.2" cy="5.2" r="3.9" stroke="#5f6670" stroke-width="1.4" fill="none"/><path d="M8 8L11.6 11.6" stroke="#5f6670" stroke-width="1.5"/></svg>
  <span>add</span>
  <svg class="abs" style="left:391px;top:9.5px" width="11" height="11" viewBox="0 0 11 11"><path d="M0.8 0.8L9.6 9.6M9.6 0.8L0.8 9.6" stroke="#202124" stroke-width="1.5"/></svg>
 </div>
 <div id="pfade"></div>
 <div style="position:absolute;left:0;top:-47px;width:430px;height:725px">
<div class="item sel" style="top:145.00px"><div class="it"><u>ADD</u></div><div class="id">(Function) Returns the sum of two numbers. Equivalent to the + operator.</div></div>
<div class="item" style="top:195.40px"><div class="it">Rename with suffix</div><div class="id">Rename columns by <u>add</u>ing a suffix</div></div>
<div class="item" style="top:245.80px"><div class="it">Rename with prefix</div><div class="id">Rename columns by <u>add</u>ing a prefix</div></div>
<div class="item" style="top:296.20px"><div class="it">Union datasets</div><div class="id"><u>Add</u> rows from other datasets</div></div>
<div class="item" style="top:346.60px"><div class="it">Suffix text</div><div class="id"><u>Add</u> a suffix to text</div></div>
<div class="item" style="top:397.00px"><div class="it">Prefix text</div><div class="id"><u>Add</u> a prefix to text</div></div>
<div class="item" style="top:447.40px"><div class="it">IPFROMINT</div><div class="id">(Function) Converts an integer into a four-octet internet protocol (IP) <u>add</u>ress</div></div>
<div class="item" style="top:497.80px"><div class="it">IPTOINT</div><div class="id">(Function) Converts a four-octet internet protocol (IPv4) <u>add</u>ress into an inte…</div></div>
<div class="item" style="top:548.20px"><div class="it">Comment</div><div class="id"><u>Add</u> a comment to your recipe</div></div>
<div class="item" style="top:598.60px"><div class="it">Join datasets</div><div class="id"><u>Add</u> columns from other datasets based on keys</div></div>
<div class="item" style="top:649.00px"><div class="it">Pad with leading</div><div class="id">Pad text with leading characters</div></div>
<div class="item" style="top:699.40px"><div class="it">DATE<u>ADD</u></div><div class="id"></div></div>
 </div>
</div>
<div id="bline"></div>
</body></html>
